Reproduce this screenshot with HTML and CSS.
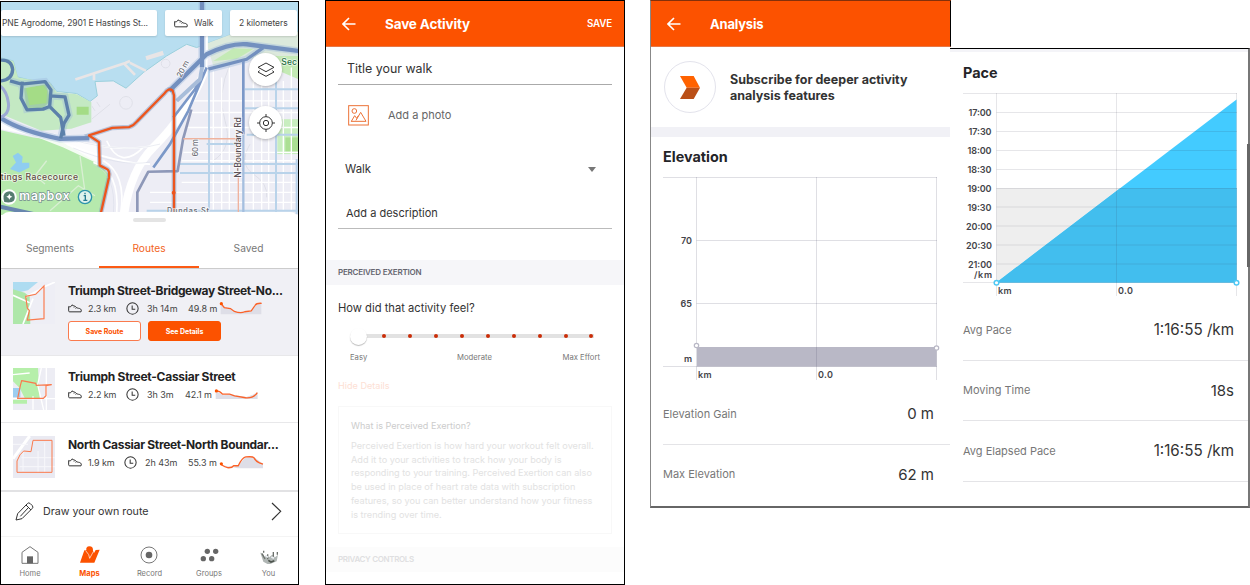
FILE: index.html
```html
<!DOCTYPE html>
<html lang="en">
<head>
<meta charset="utf-8">
<title>Activity screens</title>
<link rel="stylesheet" href="styles.css">
</head>
<body>
<svg class="defs" width="0" height="0">
  <symbol id="shoe" viewBox="0 0 42 26"><path d="M2 20V7c5 3 8 0 10-5 4 4 8 3 10 5 4 5 8 5 13 6 5 2 6 6 4 10H5c-2 0-3-1-3-3zM18 10l3-3M23 13l3-3" fill="none" stroke="currentColor" stroke-width="3" stroke-linejoin="round"/></symbol>
  <symbol id="clock" viewBox="0 0 38 38"><circle cx="19" cy="19" r="16.5" fill="none" stroke="currentColor" stroke-width="3"/><path d="M18 10v11h9" fill="none" stroke="currentColor" stroke-width="3"/></symbol>
  <symbol id="back" viewBox="0 0 14 14"><path d="M7 1L1 7l6 6M1 7h12.5" fill="none" stroke="#fff" stroke-width="1.6"/></symbol>
</svg>
<main class="board">

<section class="phone maps">
  <div class="map">
    <svg class="map-art" viewBox="3 3 891 640" preserveAspectRatio="none">
      <rect x="0" y="0" width="900" height="650" fill="#ededf5"/>
      <path d="M0 0H900V92L700 98 620 128 590 140 560 130 500 165 430 215 378 262 340 240 285 242 292 285 270 302 230 278 170 272 150 245 100 240 52 228 40 180 0 170z" fill="#b8def0" stroke="#9bd0dc" stroke-width="3"/>
      <path d="M620 128L700 98 894 92V180L850 168 760 172 640 195z" fill="#dce9dc"/>
      <path d="M640 180l60-38 60 2-50 30zM800 165h95v70l-70-30z" fill="#c4eab5"/>
      <path d="M0 172l40 8 14 50 96 16 20 28 60 6 44 24v60l-60 20-90 6-120-50H0z" fill="#c4e9c3"/>
      <path d="M72 262l66-12 14 50-24 22-48 4zM230 318h36v24h-36z" fill="#a4dc86"/>
      <path d="M0 388L100 410 180 420 300 490 330 520 298 645H0z" fill="#b6e9ad"/>
      <path d="M0 350L60 385 180 420 290 430 296 490 190 440 100 405 0 385z" fill="#fff" opacity=".85"/>
      <path d="M832 355h62v105h-62z" fill="#c9eec0"/><path d="M856 410h38v42h-38z" fill="#abdf93"/>
      <path d="M38 466l16-10 14 12-2 18 22 0 0 14-30 15-28-10 18-20z" fill="#8fcdf0"/>
      <path d="M240 465l20 145M140 480l-35 45 30 25M150 630l85-75 50 30" fill="none" stroke="#d9efd3" stroke-width="4"/>
      <g fill="none" stroke="#e9e5e6" stroke-width="8"><path d="M226 236l150-50 14-6M282 238v-20M370 186l35 36M390 186l48 24"/><path d="M438 172l52-16" stroke-width="13"/></g>
      <g fill="none" stroke="#dfe0e8" stroke-width="3"><circle cx="378" cy="306" r="19"/><circle cx="497" cy="188" r="13"/><path d="M275 355l55-45M285 330l-10-15M300 318l-10-15M690 190q-40 90-15 170t-35 120M750 430q-35 60 10 90t40 70"/></g>
      <g stroke="#fff" stroke-width="4" fill="none"><path d="M640 210V630M665 230V630M688 200V630M760 200V630M785 230V630M806 260V630M850 240V630M874 200V630M560 335H894M570 300H894M560 380H894M550 455H894M545 480H894M545 545H894M450 575H894M450 605H894"/></g>
      <g fill="none" stroke="#b9d3ea" stroke-width="6"><path d="M627 210V640M828 190V640M890 475V640M735 265H894M735 322H894M620 430H720M540 490H894M540 517H894M740 402H894M440 630H894"/></g>
      <path d="M612 100L610 220Q560 340 460 440 390 510 372 645" fill="none" stroke="#fff" stroke-width="24"/>
      <path d="M160 400Q350 465 480 430M200 430Q360 490 450 490M280 485Q360 510 350 640M310 480Q380 520 362 640M320 420Q360 510 430 440" fill="none" stroke="#fff" stroke-width="5"/>
      <path d="M160 400Q350 465 480 430M280 490Q350 520 340 640M220 442Q360 500 450 484" fill="none" stroke="#d7dae7" stroke-width="1.5"/>
      <path d="M0 350Q60 390 180 414L268 412M508 270L620 160Q690 126 740 130L895 150M606 0V200M790 140L740 175 625 205M30 240l35 10 70-8 18 25-4 50-69 8-18-85M150 285l45 3 12 55-15 25-10 45" fill="none" stroke="#9db9dd" stroke-width="22" opacity=".4"/>
      <g fill="none" stroke="#7390bf" stroke-linejoin="round"><g stroke-width="13"><path d="M0 350Q60 390 180 414L268 412 M508 270L620 160Q690 126 740 130L895 150"/><path d="M606 0V200" stroke-width="13"/><path d="M790 140L740 175 625 205" stroke-width="10"/></g>
      <g stroke-width="8" stroke="#7b98c8"><path d="M620 200L565 330 510 430 460 500M612 215L585 265 520 350M730 180V400"/><path d="M412 640v-65l33-62 88-2 16-95 25-90" stroke="#8e98b8"/></g>
      <path d="M606 200L600 235 530 300" stroke="#a8bdda" stroke-width="12"/><path d="M730 400V640" stroke="#a5bfdf" stroke-width="7"/></g>
      <g fill="none" stroke="#5c80aa" stroke-width="10" stroke-linejoin="round"><path d="M0 178q35-3 38 28-2 32-38 34M30 240l35 10 70-8 18 25-4 50-20 8-48 2-18-35 4-50M150 285l45 3 12 55-15 25-10 45M147 315l35 35 10 55"/><path d="M0 255q20 15 25 50t-25 45" stroke="#9ca9d4" stroke-width="9"/></g>
      <path d="M0 618l100 22" stroke="#6886ae" stroke-width="12"/>
      <path d="M550 414H715V640" fill="none" stroke="#efb39e" stroke-width="4"/>
      <path d="M302 640l25-110q3-22-8-26l-20-10-2-70-30-20 70-23 50-2q15-5 25-18l82-84q12-18 24-8l4 15V640" fill="none" stroke="#7792bb" stroke-width="14" opacity=".45"/>
      <path d="M302 640l25-110q3-22-8-26l-20-10-2-70-30-20 70-23 50-2q15-5 25-18l82-84q12-18 24-8l4 15V640" fill="none" stroke="#ed551d" stroke-width="7" stroke-linejoin="round"/>
      <circle cx="521" cy="576" r="6" fill="#ed551d"/>
      <g class="map-label" font-size="26" fill="#686a73"><text transform="translate(543 231) rotate(-62)" textLength="53" font-size="23">20 m</text><text transform="translate(594 467) rotate(-90)" textLength="52" font-size="23">60 m</text><text transform="translate(722 531) rotate(-90)" textLength="182" fill="#574f55">N-Boundary Rd</text><text x="501" y="638" textLength="126" font-size="22">Dundas St</text><text x="2" y="538" textLength="232" fill="#624c42">tings Racecource</text><text x="844" y="191" textLength="47" fill="#276f46">Sec</text></g>
      <g><circle cx="27" cy="589" r="23" fill="#fff"/><path d="M13 604q-7-22 5-29 16-9 24 4 7 20-7 25-9 3-22 0z" fill="#567d70"/><path d="M28 579l3 6 6 3-6 3-3 6-3-6-6-3 6-3z" fill="#fff"/><text x="58" y="598" textLength="151" font-size="36" class="wordmark">mapbox</text><circle cx="255" cy="589" r="20" fill="#dff2ec" stroke="#2d94ab" stroke-width="4"/><path d="M251 585h5v14m-6 0h12M255 576v5" stroke="#267b91" stroke-width="4" fill="none"/></g>
    </svg>
    <div class="filters">
      <span class="chip place">PNE Agrodome, 2901 E Hastings St...</span>
      <span class="chip sport"><svg class="shoe"><use href="#shoe"/></svg>Walk</span>
      <span class="chip dist">2 kilometers</span>
    </div>
    <button class="fab layers"><svg width="18" height="16" viewBox="0 0 54 48"><path d="M27 3L51 16 27 29 3 16zM8 26L3 30 27 43 51 30 46 26" fill="none" stroke="#333" stroke-width="3"/></svg></button>
    <button class="fab locate"><svg width="18" height="18" viewBox="0 0 54 54"><circle cx="27" cy="27" r="19" fill="none" stroke="#333" stroke-width="3"/><circle cx="27" cy="27" r="8" fill="none" stroke="#333" stroke-width="3"/><path d="M27 0v8M27 46v8M0 27h8M46 27h8" stroke="#333" stroke-width="3"/></svg></button>
  </div>
  <div class="sheet">
    <div class="handle"></div>
    <nav class="tabs"><span>Segments</span><span class="on">Routes</span><span>Saved</span></nav>
  </div>
  <article class="route selected">
    <svg class="thumb" viewBox="0 0 126 126"><rect width="126" height="126" fill="#eeeef5"/><path d="M0 0h75L45 25 0 35z" fill="#aedcf1"/><path d="M0 22l35 10 15 12 2 82H0z" fill="#aee7a9"/><path d="M0 40l50 22M80 20l46-20M30 126L60 50M38 45L85 20" stroke="#fff" stroke-width="5"/><path d="M38 43l30-6 25-25V110l-50 4 6-28-6-8z" fill="none" stroke="#fa7a4d" stroke-width="3.5"/></svg>
    <div class="info"><h3 class="t1">Triumph Street-Bridgeway Street-No...</h3>
      <div class="meta"><svg class="shoe"><use href="#shoe"/></svg><span class="km">2.3 km</span><svg class="clock"><use href="#clock"/></svg><span class="time">3h 14m</span><span>49.8 m</span><svg class="spark" viewBox="0 0 134 40"><path d="M3 4l10 13 20 3 12 10 18 4 35-5 12-20 18-5V38H3z" fill="#dedee7"/><path d="M4 5l10 12 19 3 12 9q20 7 32 1l20-3 12-17q4-7 20-6" fill="none" stroke="#fa6229" stroke-width="4"/><circle cx="5" cy="5" r="5" fill="#fc5200"/></svg></div>
      <div class="actions"><button class="btn">Save Route</button><button class="btn solid">See Details</button></div>
    </div>
  </article>
  <article class="route second">
    <svg class="thumb" viewBox="0 0 126 126"><rect width="126" height="126" fill="#ededf4"/><path d="M0 0h75l5 90H35L20 60 0 40zM0 95h42v12H0z" fill="#b6efaa"/><path d="M0 60h22v28H0z" fill="#9ccdf0"/><path d="M85 0L74 50 92 126M0 20l50-5M60 85v40M100 0v126M0 92h126" stroke="#fff" stroke-width="4" fill="none"/><path d="M26 38l42 8 2 6 46-2-17 3v30l-8 8H14l8-38z" fill="none" stroke="#fa7a4d" stroke-width="3.5"/></svg>
    <div class="info"><h3 class="t2">Triumph Street-Cassiar Street</h3>
      <div class="meta"><svg class="shoe"><use href="#shoe"/></svg><span class="km">2.2 km</span><svg class="clock"><use href="#clock"/></svg><span class="time b">3h 3m</span><span>42.1 m</span><svg class="spark" viewBox="0 0 134 40"><path d="M3 9l24 13 20-3 50 9 20-7 15-8V34H3z" fill="#dedee7"/><path d="M4 9q12 0 20 10l22 0 15 5 34 6q25 2 36-16" fill="none" stroke="#fa6229" stroke-width="4"/><circle cx="5" cy="9" r="5" fill="#fc5200"/></svg></div></div>
  </article>
  <article class="route third">
    <svg class="thumb" viewBox="0 0 126 126"><rect width="126" height="126" fill="#eaeaf2"/><path d="M0 68L50 0" stroke="#fff" stroke-width="9"/><path d="M0 25h45M20 92h106M25 65h100M30 45v60M75 45v65M95 20v90" stroke="#f7f7fb" stroke-width="3"/><path d="M60 13h57v96H12V75q8-22 20-30l22 2z" fill="none" stroke="#fa7a4d" stroke-width="3"/></svg>
    <div class="info"><h3 class="t3">North Cassiar Street-North Boundar...</h3>
      <div class="meta"><svg class="shoe"><use href="#shoe"/></svg><span class="km c">1.9 km</span><svg class="clock"><use href="#clock"/></svg><span class="time c">2h 43m</span><span>55.3 m</span><svg class="spark" viewBox="0 0 134 40"><path d="M3 27l30 9 26-8 20-24h27l27 20V38H55z" fill="#dedee7"/><path d="M4 26q12 8 20 10 14 1 19-6h14Q70 4 80 3q22-2 25 2 7 13 17 16l11 4" fill="none" stroke="#fa6229" stroke-width="4"/><circle cx="5" cy="24" r="5" fill="#fc5200"/></svg></div></div>
  </article>
  <div class="draw"><svg width="19" height="19" viewBox="0 0 57 57"><path d="M3 54l5-19L37 5q4-5 9 0l6 6q4 5-1 9L21 50zM33 9l15 15M40 17L16 43" fill="none" stroke="#333" stroke-width="3"/></svg><span>Draw your own route</span><svg width="11" height="19" viewBox="0 0 33 57"><path d="M3 3l26 25L3 54" fill="none" stroke="#333" stroke-width="3.5"/></svg></div>
  <nav class="bottom">
    <div><svg width="18" height="18" viewBox="0 0 54 54"><path d="M3 19L27 2l24 17v33H3z" fill="none" stroke="#777" stroke-width="3"/><path d="M18 31h18v21H18z" fill="#666"/></svg><span>Home</span></div>
    <div class="on"><svg width="20" height="18" viewBox="0 0 60 54"><path d="M13 13h6q-2-11 9-12 12 0 11 13l3 7 5-9 12-1L43 50H0z" fill="#fc5200"/><path d="M17 14q12 12 12 23l11-20" fill="none" stroke="#fff" stroke-width="2"/></svg><span>Maps</span></div>
    <div><svg width="18" height="18" viewBox="0 0 54 54"><circle cx="27" cy="27" r="24" fill="none" stroke="#777" stroke-width="3"/><circle cx="27" cy="27" r="10" fill="#666"/></svg><span>Record</span></div>
    <div><svg width="19" height="18" viewBox="0 0 57 54"><g fill="#666"><circle cx="22" cy="16" r="8"/><circle cx="47" cy="16" r="8"/><circle cx="10" cy="38" r="8"/><circle cx="35" cy="38" r="8"/></g></svg><span>Groups</span></div>
    <div><svg width="20" height="18" viewBox="0 0 60 54"><path d="M4 20q8 0 12 12l6-5 8 7 10-8 8 8 9-8-4 20-24 10-16-9z" fill="#b0b6b4"/><path d="M9 23l9 16M26 25v15M43 18v14M55 18v8M14 14v6" stroke="#6b706b" stroke-width="4" fill="none"/><path d="M19 28l8 6M37 33l8 4" stroke="#eef1f5" stroke-width="5"/><path d="M28 43l8 5 10-4" stroke="#4d544d" stroke-width="5" fill="none"/></svg><span>You</span></div>
  </nav>
</section>

<section class="phone save">
  <header class="bar"><svg width="14" height="14"><use href="#back"/></svg><h1 class="h-save">Save Activity</h1><b>SAVE</b></header>
  <div class="field title">Title your walk</div>
  <div class="photo"><svg width="21" height="21" viewBox="0 0 63 63"><rect x="2" y="2" width="59" height="58" fill="none" stroke="#ec7338" stroke-width="3"/><circle cx="19" cy="18" r="7" fill="none" stroke="#ec7338" stroke-width="3"/><path d="M10 49l10-17 6 8 5-8M24 46l14-24 16 27H9" fill="none" stroke="#ec7338" stroke-width="3"/></svg><span>Add a photo</span></div>
  <div class="select"><span>Walk</span><i></i></div>
  <div class="field desc">Add a description</div>
  <h2 class="band">PERCEIVED EXERTION</h2>
  <p class="ask">How did that activity feel?</p>
  <div class="slider"><span class="knob"></span><i></i><i></i><i></i><i></i><i></i><i></i><i></i><i></i><i></i></div>
  <div class="scale"><span>Easy</span><span>Moderate</span><span>Max Effort</span></div>
  <a class="hide">Hide Details</a>
  <div class="note"><h4>What is Perceived Exertion?</h4><p><span>Perceived Exertion is how hard your workout felt overall.</span><span>Add it to your activities to track how your body is</span><span>responding to your training. Perceived Exertion can also</span><span>be used in place of heart rate data with subscription</span><span>features, so you can better understand how your fitness</span><span>is trending over time.</span></p></div>
  <h2 class="band faint">PRIVACY CONTROLS</h2>
</section>

<section class="analysis">
  <div class="left">
    <header class="bar"><svg width="14" height="14"><use href="#back"/></svg><h1 class="h-an">Analysis</h1></header>
    <div class="promo"><span class="badge"><svg width="20" height="23" viewBox="0 0 60 69"><path d="M0 0h41l19 35H20z" fill="#ff6200"/><path d="M20 35h40L41 69H0z" fill="#ba4f17"/></svg></span><p><span>Subscribe for deeper activity</span><br><span class="p2">analysis features</span></p></div>
    <h2 class="chart-title elev">Elevation</h2>
    <svg class="chart" viewBox="663 176 288 206" width="288" height="206">
      <path d="M697 347H936.500V366.500H697z" fill="#b9b8c6"/>
      <path d="M663 177.500H937M696.500 240.500H937M696.500 303.500H937M663 366.500H937M696.500 177V380M816.500 177V380M936.500 177V380" fill="none" stroke="#50506a" stroke-opacity=".18"/>
      <g fill="#fff" stroke="#b9b8c6" stroke-width="1.200"><circle cx="696.500" cy="345.500" r="2.200"/><circle cx="936.500" cy="348" r="2.200"/></g>
      <g class="axis"><text x="681" y="244" textLength="11">70</text><text x="680.500" y="307" textLength="11.500">65</text><text x="684" y="362" textLength="8">m</text><text x="698" y="378" textLength="13.500">km</text><text x="818" y="378" textLength="15">0.0</text></g>
    </svg>
    <dl class="stats"><div><dt>Elevation Gain</dt><dd>0 m</dd></div><div><dt>Max Elevation</dt><dd>62 m</dd></div></dl>
  </div>
  <div class="right">
    <h2 class="chart-title pace">Pace</h2>
    <svg class="chart" viewBox="963 91 287 206" width="287" height="206">
      <path d="M996.500 188H1236.500V282.500H996.500z" fill="#eee"/>
      <path d="M996.500 282.500L1236.500 99.500V282.500z" fill="#43cbff"/><path d="M996.500 282.500L1120.500 188H1236.500V282.500z" fill="#42beee"/>
      <path d="M963 93.500H1237M996.500 112.500H1237M996.500 131.500H1237M996.500 150.500H1237M996.500 169.500H1237M996.500 188.500H1237M996.500 207H1237M996.500 226H1237M996.500 245H1237M996.500 264H1237M963 282.500H1237M996.500 93V296M1116.500 93V296M1236.500 93V296" fill="none" stroke="#303048" stroke-opacity=".12"/>
      <g fill="#fff" stroke="#4fc8f4" stroke-width="1.500"><circle cx="996.500" cy="282.700" r="2.300"/><circle cx="1236.500" cy="282.700" r="2.300"/></g>
      <g class="axis"><text x="968.500" y="115.500" textLength="23">17:00</text><text x="968.500" y="134.500" textLength="23">17:30</text><text x="967.500" y="153.500" textLength="24">18:00</text><text x="967.500" y="172.500" textLength="24">18:30</text><text x="967.500" y="191.500" textLength="24">19:00</text><text x="967.500" y="210.500" textLength="24">19:30</text><text x="966" y="229.500" textLength="26">20:00</text><text x="966" y="248.500" textLength="26">20:30</text><text x="968" y="267.500" textLength="24">21:00</text><text x="974" y="278" textLength="18">/km</text><text x="998" y="294" textLength="13.500">km</text><text x="1118" y="294" textLength="15">0.0</text></g>
    </svg>
    <dl class="stats"><div><dt>Avg Pace</dt><dd class="wide">1:16:55 /km</dd></div><div><dt>Moving Time</dt><dd>18s</dd></div><div><dt>Avg Elapsed Pace</dt><dd class="wide">1:16:55 /km</dd></div></dl>
    <span class="thumbbar"></span>
  </div>
</section>
</main>
</body>
</html>
```
FILE: styles.css
```css
* { box-sizing: border-box; }
body { margin: 0; background: #fff; font-family: Inter, "Noto Sans", sans-serif; color: #333; white-space: nowrap; }
h1, h2, h3, h4, p, dl, dd { margin: 0; }
button { font-family: inherit; padding: 0; }
svg { display: block; flex: none; }
.defs { position: absolute; }
.board { display: flex; width: 1250px; height: 585px; overflow: hidden; }
.phone { border: 1px solid #000; height: 584px; overflow: hidden; flex: none; }
.maps { width: 299px; margin-top: 1px; }
.save { width: 300px; height: 585px; margin-left: 26px; }

/* Map */
.map { position: relative; height: 213px; }
.map-art { width: 297px; height: 213px; }
.map-label { font-weight: 500; stroke: #fff; stroke-width: 5px; paint-order: stroke; stroke-opacity: .7; }
.wordmark { font-weight: 600; fill: #fff; stroke: #738b8d; stroke-width: 4px; paint-order: stroke; }
.filters { position: absolute; top: 8px; left: 0; display: flex; gap: 8px; }
.chip { display: flex; align-items: center; height: 26px; background: #fff; border-radius: 2px; font-size: 8.5px; color: #444; box-shadow: 0 1px 2px #0002; }
.place { width: 156px; padding-left: 1px; letter-spacing: -.07px; }
.sport { width: 57px; padding-left: 9px; gap: 6px; }
.dist { width: 67px; padding-left: 9px; letter-spacing: -.05px; }
.shoe { width: 14px; height: 9px; color: #333; }
.fab { position: absolute; left: 248px; width: 33px; height: 33px; border: 0; border-radius: 50%; background: #fff; display: grid; place-items: center; box-shadow: 0 1px 3px #0004; }
.layers { top: 51px; }
.locate { top: 104px; }

/* Bottom sheet */
.sheet { position: relative; margin-top: -3px; height: 57px; background: #fff; border-radius: 8px 8px 0 0; border-bottom: 1px solid #ccc; }
.handle { position: absolute; left: 132px; top: 6px; width: 33px; height: 4px; border-radius: 2px; background: #e4e4e4; }
.tabs { display: grid; grid-template-columns: 98px 100px 99px; height: 56px; }
.tabs span { display: grid; place-items: center; padding-top: 16px; font-size: 10.2px; color: #777; }
.tabs .on { padding-top: 18px; color: #f26322; border-bottom: 2px solid #fc5a14; }
.route { display: flex; padding: 12px 0 0 12px; height: 67px; border-bottom: 1px solid #e8e8ea; }
.selected { height: 87px; padding-top: 13px; background: #f0f0f5; }
.third { height: 69px; padding-top: 13px; border-bottom: 2px solid #e2e2e4; }
.thumb { width: 42px; height: 42px; margin-right: 13px; }
.route h3 { font-size: 12px; line-height: 16px; font-weight: 700; color: #222; margin-top: 1px; }
.t1 { letter-spacing: -.35px; }
.t2 { letter-spacing: -.28px; }
.t3 { letter-spacing: -.31px; }
.meta { display: flex; align-items: center; height: 18px; font-size: 9px; color: #444; letter-spacing: -.05px; }
.km { width: 43px; padding-left: 6px; letter-spacing: -.1px; }
.clock { width: 13px; height: 13px; margin: 0 8px 0 1px; color: #333; }
.time { width: 41px; }
.time.b { width: 38px; }
.km.c { width: 41px; }
.time.c { width: 43px; }
.spark { width: 45px; height: 13px; margin-left: 2px; }
.actions { display: flex; gap: 7px; margin-top: 4px; }
.btn { width: 73px; height: 20px; border: 1px solid #fa7a4d; border-radius: 3px; background: #fff; color: #fc5200; font-size: 7px; font-weight: 700; letter-spacing: -.05px; }
.solid { background: #fc5200; color: #fff; border-color: #fc5200; }
.draw { display: flex; align-items: center; height: 45px; padding: 0 16px 5px 14px; font-size: 10.7px; color: #333; border-bottom: 1px solid #f4f4f4; }
.draw span { margin: 0 auto 0 9px; }
.bottom { display: grid; grid-template-columns: 58px 61px 59px 60px 59px; height: 46px; padding-top: 9px; justify-items: center; }
.bottom div { display: flex; flex-direction: column; align-items: center; gap: 5px; font-size: 7.5px; line-height: 10px; color: #777; }
.bottom .on { color: #fc5200; font-weight: 700; }

/* App bars */
.bar { display: flex; align-items: center; height: 46px; padding: 0 12px 0 16px; background: #fc5200; color: #fff; border-bottom: 1px solid #e87846; }
.bar h1 { font-size: 13.5px; line-height: 20px; font-weight: 700; margin-left: 29px; letter-spacing: -.15px; }
.bar .h-an { font-size: 13px; letter-spacing: -.2px; }
.bar b { margin-left: auto; font-size: 9.8px; font-weight: 600; letter-spacing: -.15px; }

/* Save form */
.field { margin: 0 12px; border-bottom: 1px solid #aaa; }
.title { height: 38px; line-height: 44px; padding-left: 9px; font-size: 12.4px; }
.photo { display: flex; align-items: center; height: 60px; padding-left: 22px; font-size: 11px; color: #666; }
.photo span { margin-left: 19px; }
.select { display: flex; justify-content: space-between; align-items: center; height: 48px; padding: 0 28px 0 19px; font-size: 11.4px; }
.select i { border: 4px solid transparent; border-top: 5px solid #777; border-bottom: 0; }
.desc { height: 36px; padding-left: 8px; line-height: 41px; font-size: 11px; border-color: #bbb; }
.band { height: 25px; margin-top: 31px; padding-left: 12px; background: #f6f6f9; color: #666670; font-size: 8px; line-height: 25px; font-weight: 600; letter-spacing: -.2px; }
.ask { padding: 14px 0 0 12px; font-size: 11.2px; line-height: 18px; }
.slider { display: flex; align-items: center; justify-content: space-between; height: 4px; margin: 17px 30.5px 0; background: #e2e2e2; }
.knob { width: 17px; height: 17px; margin: 0 -6.5px; border-radius: 50%; background: #fff; box-shadow: 0 1px 1px #0004; }
.slider i { width: 4px; height: 4px; border-radius: 50%; background: #ca2d08; }
.scale { display: grid; grid-template-columns: 1fr 36px 1fr; margin: 14px 24px 0; font-size: 7.7px; line-height: 12px; color: #777; }
.scale span:last-child { text-align: right; }
.hide { display: block; margin: 15px 0 0 12px; font-size: 9.1px; line-height: 14px; color: #fde0d4; }
.note { width: 274px; height: 128px; margin: 13px 12px 0; padding: 11px 12px; border: 1px solid #f8f8f8; color: #e2e2e2; }
.note h4 { font-size: 9.1px; line-height: 16px; font-weight: 400; color: #ccc; }
.note p { margin-top: 5px; font-size: 9.15px; line-height: 13.7px; }
.note p span { display: block; }
.faint { margin-top: 13px; background: #fcfcfc; color: #dfdfe1; letter-spacing: -.35px; }

/* Analysis */
.analysis { display: flex; margin-left: 25px; width: 600px; height: 508px; flex: none; }
.left { width: 301px; height: 508px; flex: none; border: 1px solid #888; border-top-color: #84300a; border-right: 0; border-bottom: 2px solid #666; }
.left .bar { width: 300px; border-right: 1px solid #000; }
.promo { display: flex; align-items: center; height: 90px; padding-left: 13px; border-bottom: 10px solid #f1f1f6; font-size: 12.5px; line-height: 16px; font-weight: 700; }
.badge { width: 52px; height: 52px; display: grid; place-items: center; border: 1px solid #e3e3ec; border-radius: 50%; }
.promo p { margin: 1px 0 0 14px; }
.chart-title { font-size: 14.4px; line-height: 20px; color: #242428; margin-left: 12px; }
.elev { margin-top: 10px; }
.pace { margin-top: 11px; }
.chart { margin-left: 12px; }
.elev + .chart { margin-top: 9px; }
.pace + .chart { margin-top: 8px; }
.axis { font-size: 9px; font-weight: 600; fill: #444449; }
.stats { margin: 2px 0 0 12px; }
.stats div { display: flex; justify-content: space-between; align-items: center; height: 60.5px; padding-right: 17px; border-bottom: 1px solid #e4e4e7; }
.left .stats div:last-child { border-bottom-color: transparent; }
.stats dt { font-size: 11px; color: #777; }
.stats dd { font-size: 15px; }
.right { position: relative; flex: none; width: 300px; height: 460px; margin: 48px 0 0 -1px; background: #fff; border: 1px solid #000; border-left: 0; border-right: 2px solid #777; border-bottom: 2px solid #666; padding: 3px 0 0 1px; box-shadow: inset 0 3px #f4f4f8; }
.right .stats { margin-top: 3px; }
.right .stats div { padding-right: 14px; }
.stats .wide { font-size: 15.2px; }
.thumbbar { position: absolute; right: -2px; top: 95px; width: 3px; height: 123px; background: #666; }
```
